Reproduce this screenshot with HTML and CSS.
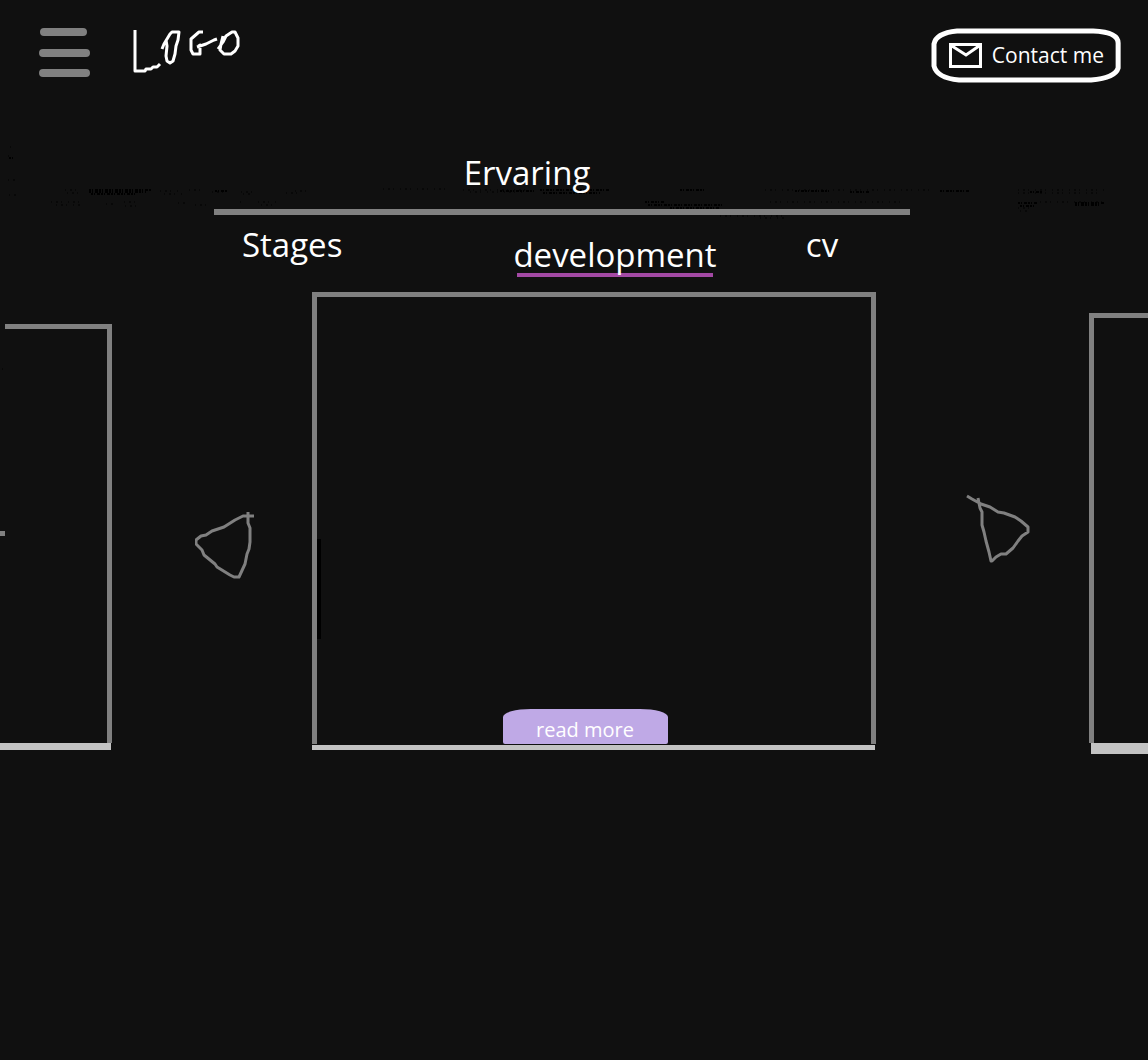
FILE: index.html
```html
<!DOCTYPE html>
<html lang="nl">
<head>
<meta charset="utf-8">
<meta name="viewport" content="width=device-width, initial-scale=1">
<title>Ervaring</title>
<link rel="stylesheet" href="styles.css">
</head>
<body>
<svg class="dust" viewBox="0 0 1148 80" aria-hidden="true">
  <path class="dust-light" d="M65 50H80M67 53H80M160 51H180M164 54H182M189 50H202M212 52H228M241 52H256M243 54H252M286 53H300M295 51H308M51 62H80M56 65H80M106 64H113M124 62H140M125 66H139M178 63H185M195 65H211M240 62H245M258 62H277M261 65H276M383 49H445M463 50H530M470 52H525M720 76H788M760 78H786M765 50H930M770 62H905M1018 50H1105M1018 53H1100M1040 62H1105M1018 68H1035M1020 71H1030M8 16H13M9 55H17M8 40H17M10 7H12M2 229H4"/>
  <path class="dust-dense" d="M89 50H152M89 52H146M91 54H135M215 51H228M500 51H535M540 50H610M543 53H600M645 62H665M648 65H722M670 68H720M680 50H705M795 51H830M850 52H870M940 51H970M1030 52H1042M1075 63H1105M1075 65H1100M1018 63H1038M1020 66H1034M9 18H13"/>
</svg>
<header class="header">
  <button class="menu" type="button" aria-label="Menu">
    <svg width="51" height="50" viewBox="0 0 51 50"><path d="M5 4H44M4 25H47M4 45H47"/></svg>
  </button>
  <a class="logo" href="#" aria-label="Logo">
    <svg width="110" height="48" viewBox="0 2 110 48"><path d="M4 4V45H14L15 43H20L22 41H26L29 38M31 23L33 18L39 8L41 6H48L47 14L45 20L44 28L42 35L39 37L36 35L35 30L36 20L35 14M72 6L68 6L60 13V24L62 28H69V20L68 18M66 21L75 18L83 14L86 13M87 23L92 16L95 10L101 6H104L107 12V20L104 25L100 28H93L89 24L90 18L92 10"/></svg>
  </a>
  <a class="contact" href="#contact">
    <svg class="contact-frame" viewBox="0 0 190 55" preserveAspectRatio="none" aria-hidden="true"><path d="M26 3H162Q187 4 187 15V40Q184 50 160 52H28Q6 50 3 38V16Q5 5 26 3Z"/></svg>
    <svg class="mail" width="33" height="25" viewBox="0 0 33 25" aria-hidden="true"><path d="M1.500 1.500H31.500V23.500H1.500ZM3 3L17 12L30 3"/></svg>
    <span>Contact me</span>
  </a>
</header>
<main>
  <section class="intro">
    <h1 class="title">Ervaring</h1>
    <nav class="tabs">
      <a class="tab" href="#stages">Stages</a>
      <a class="tab tab-active" href="#development" aria-current="page">development</a>
      <a class="tab" href="#cv">cv</a>
    </nav>
  </section>
  <section class="carousel" aria-label="development">
    <div class="slide slide-prev"><div class="slide-body"><span class="stub"></span></div></div>
    <button class="arrow arrow-prev" type="button" aria-label="Vorige">
      <svg width="60" height="68" viewBox="0 0 60 68"><path d="M59 5H48L40 9L29 16L17 20L11 24L6 25L1 29V33L7 39L9 44L20 53L22 56L35 64L39 66H44L50 53L52 43L54 38L55 31V17L53 12V1"/></svg>
    </button>
    <article class="slide slide-current">
      <div class="slide-body">
        <span class="scroll"></span>
        <button class="more" type="button">read more</button>
      </div>
    </article>
    <button class="arrow arrow-next" type="button" aria-label="Volgende">
      <svg width="65" height="70" viewBox="0 0 65 70"><path d="M1 2L6 5L15 10L24 13L32 18L38 19L49 23L55 27L62 33V38L56 42L52 47L47 54L40 60H35L30 63L26 67H25L23 58L20 47L18 38L16 31V18L14 14L12 4"/></svg>
    </button>
    <div class="slide slide-next"><div class="slide-body"></div></div>
  </section>
</main>
</body>
</html>
```
FILE: styles.css
```css
* { box-sizing: border-box; }

body {
  margin: 0;
  min-height: 100vh;
  background: #101010;
  color: #fff;
  font-family: "Open Sans", "Noto Sans", sans-serif;
  font-size: 20px;
  position: relative;
}

a { color: inherit; text-decoration: none; }

button {
  padding: 0;
  border: 0;
  background: none;
  color: inherit;
  font: inherit;
  cursor: pointer;
}

svg {
  display: block;
  fill: none;
  stroke: #fff;
  stroke-width: 3;
  stroke-linejoin: round;
}

/* speckled texture behind the title */
.dust {
  position: absolute;
  z-index: -1;
  top: 140px;
  left: 0;
  width: 100%;
  overflow: visible;
  pointer-events: none;
  stroke: #000;
  stroke-width: 1;
}
.dust-light { stroke-dasharray: 1 4 2 3 1 6; }
.dust-dense { stroke-dasharray: 2 1 1 2 3 1; stroke-width: 2; }

.header {
  display: flex;
  align-items: flex-start;
  padding: 28px 27px 0 39px;
}
.menu svg { stroke: #808080; stroke-width: 8; stroke-linecap: round; }
.logo { margin-left: 41px; }

.contact {
  position: relative;
  display: flex;
  align-items: center;
  gap: 10px;
  margin-left: auto;
  height: 55px;
  padding: 0 17px 0 18px;
  font-size: 21px;
  line-height: 28px;
}
.contact span { padding-bottom: 2px; }
.mail { stroke-linejoin: miter; }
.contact-frame {
  position: absolute;
  inset: 0;
  width: 100%;
  height: 100%;
  stroke-width: 5;
}

.intro { margin: 70px 238px 0 214px; }
.title {
  margin: 0;
  padding: 0 70px 16px 0;
  border-bottom: 6px solid #808080;
  font-size: 33px;
  font-weight: 400;
  line-height: 40px;
  text-align: center;
}
.tabs {
  display: grid;
  grid-template-columns: 271fr 292fr 104fr;
  justify-items: start;
  align-items: start;
  padding: 10px 0 0 28px;
  font-size: 33px;
  line-height: 40px;
}
.tab-active { padding-top: 10px; }
.tab-active::after {
  content: "";
  display: block;
  height: 4px;
  margin: -2px 4px 0;
  background: #a349a4;
}

.carousel {
  display: grid;
  grid-template-columns: 112fr 200fr 564fr 213fr 59fr;
  align-items: start;
  margin-top: 15px;
}
.slide-body {
  display: flex;
  border: 5px solid #808080;
  border-bottom: 0;
}
.slide::after {
  content: "";
  display: block;
  background: #c3c3c3;
}

.slide-prev { padding-top: 32px; }
.slide-prev .slide-body {
  align-items: center;
  min-height: 419px;
  margin-left: 5px;
  padding-bottom: 6px;
  border-left: 0;
}
.slide-prev::after { height: 7px; margin-right: 1px; }
.stub {
  width: 5px;
  height: 5px;
  margin-left: -5px;
  background: #808080;
}

.slide-current .slide-body {
  position: relative;
  justify-content: center;
  align-items: flex-end;
  min-height: 452px;
  padding-right: 18px;
}
.slide-current::after { height: 5px; margin: 1px 1px 0 0; }
.scroll {
  position: absolute;
  left: 0;
  top: 242px;
  width: 4px;
  height: 100px;
  background: #000;
}
.more {
  width: 165px;
  height: 35px;
  padding-top: 5px;
  border-radius: 28px 28px 2px 2px / 8px 8px 2px 2px;
  background: #bfa9e6;
}

.slide-next { padding-top: 21px; }
.slide-next .slide-body { min-height: 430px; border-right: 0; }
.slide-next::after { height: 11px; margin-left: 2px; }

.arrow { justify-self: center; }
.arrow svg { stroke: #808080; }
.arrow-prev { margin: 219px 0 0 25px; }
.arrow-next { margin: 202px 0 0 32px; }
```
